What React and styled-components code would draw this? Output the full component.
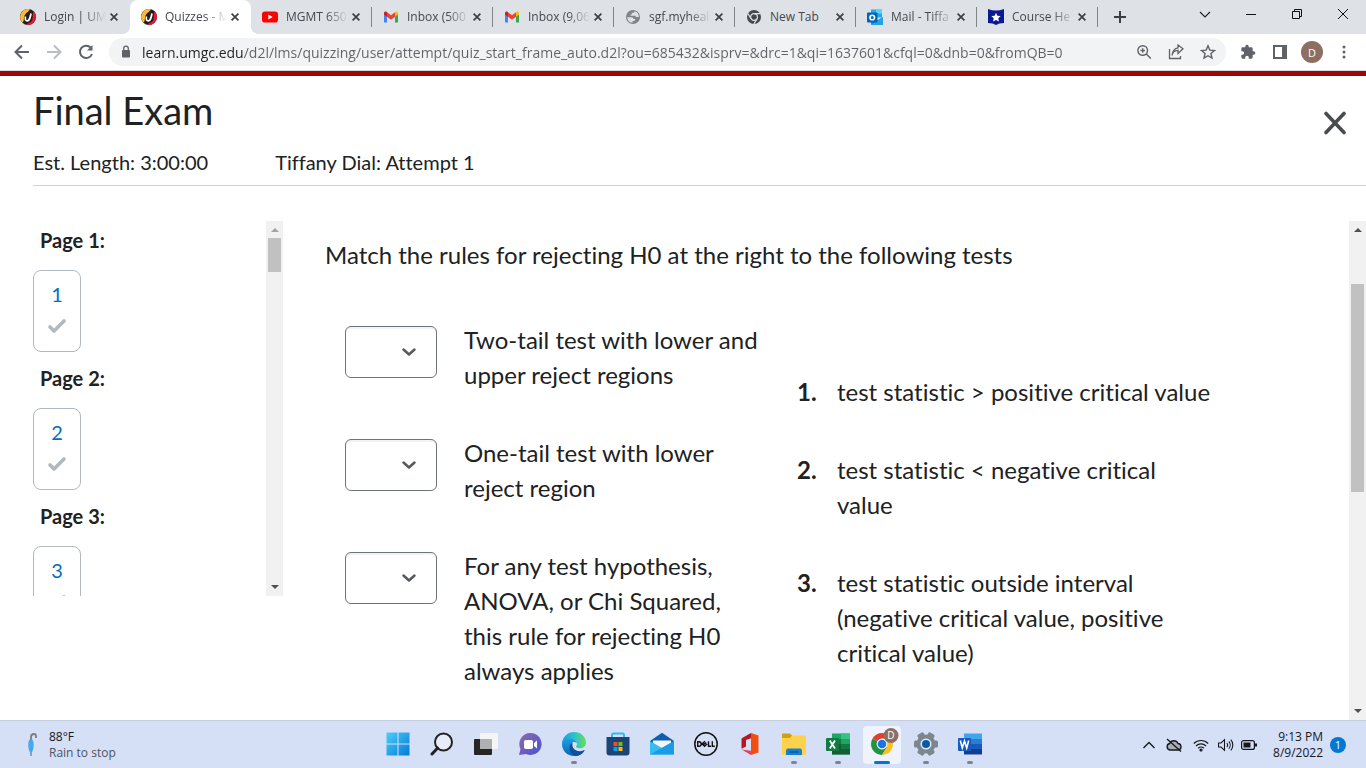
import { useState } from "react";
import styled, { createGlobalStyle, css } from "styled-components";

const GlobalStyle = createGlobalStyle`
  * { box-sizing: border-box; }
  body { margin: 0; background: #fff; }
  button, input, select { font: inherit; color: inherit; }
`

const Screen = styled.div`
  display: flex;
  flex-direction: column;
  height: 100vh;
  overflow: hidden;
  font-family: "Open Sans", "Noto Sans", sans-serif;
  font-size: 12px;
  color: #202124;
`

const IconButton = styled.button`
  display: flex;
  align-items: center;
  justify-content: center;
  flex: none;
  width: ${props => props.$w || 32}px;
  height: ${props => props.$h || 28}px;
  padding: 0;
  border: 0;
  background: none;
  color: ${props => props.$color || '#5f6368'};
  cursor: pointer;
`

/* ---------- browser ---------- */

const TabStrip = styled.div`
  display: flex;
  flex: none;
  height: 34px;
  padding-left: 9px;
  background: #dee1e6;
`

const Tab = styled.div`
  display: flex;
  align-items: center;
  flex: 0 1 121px;
  min-width: 0;
  height: 34px;
  padding: 0 9px 0 11px;
  border-radius: 8px 8px 0 0;
  ${props => props.$active && css`
    position: relative;
    background: #fff;
    &::before, &::after {
      content: '';
      position: absolute;
      bottom: 0;
      width: 8px;
      height: 8px;
    }
    &::before {
      right: 100%;
      background: radial-gradient(circle at 0 0, transparent 8px, #fff 8px);
    }
    &::after {
      left: 100%;
      background: radial-gradient(circle at 100% 0, transparent 8px, #fff 8px);
    }
  `}
`

const TabLink = styled.button`
  display: flex;
  align-items: center;
  gap: 8px;
  flex: 1;
  min-width: 0;
  padding: 0;
  border: 0;
  background: none;
  color: #45494d;
  cursor: pointer;
  svg { flex: none; }
`

const TabTitle = styled.span`
  flex: 1;
  min-width: 0;
  overflow: hidden;
  white-space: nowrap;
  text-align: left;
  line-height: 18px;
  mask-image: linear-gradient(90deg, #000 40px, transparent 62px);
  ${props => props.$whole && css`mask-image: none;`}
`

const Separator = styled.span`
  flex: none;
  align-self: center;
  width: 1px;
  height: 20px;
  margin-left: -1px;
  background: ${props => props.$hidden ? 'transparent' : '#80868b'};
`

const WindowButtons = styled.div`
  display: flex;
  margin-left: auto;
`

const Toolbar = styled.div`
  display: flex;
  align-items: center;
  flex: none;
  height: 37px;
  padding: 0 6px;
  border-bottom: 1px solid #d5d8db;
`

const Omnibox = styled.div`
  display: flex;
  align-items: center;
  flex: 1;
  min-width: 0;
  height: 28px;
  margin: 0 6px 0 7px;
  padding: 0 2px 0 12px;
  border-radius: 14px;
  background: #f1f3f4;
`

const Address = styled.input`
  flex: 1;
  min-width: 0;
  height: 28px;
  margin-left: 11px;
  padding: 0;
  border: 0;
  outline: 0;
  font-size: 14px;
  color: transparent;
  background: linear-gradient(90deg, #202124 102px, #5f6368 102px);
  background-clip: text;
`

const Avatar = styled.span`
  display: grid;
  place-items: center;
  width: 22px;
  height: 22px;
  border-radius: 50%;
  background: #8d6e63;
  color: #fff;
  font-size: 11px;
`

/* ---------- quiz ---------- */

const Quiz = styled.main`
  display: flex;
  flex-direction: column;
  flex: 1;
  min-height: 0;
  border-top: 5px solid #a00606;
  font-family: Lato, sans-serif;
  font-variant-ligatures: none;
  color: #202122;
`

const QuizHeader = styled.header`
  display: flex;
  justify-content: space-between;
  flex: none;
  height: 110px;
  margin-left: 33px;
  border-bottom: 1px solid #cdd5dc;
`

const Title = styled.h1`
  margin: 10px 0 16px;
  font-size: 38px;
  line-height: 48px;
  font-weight: 400;
`

const Facts = styled.div`
  display: flex;
  gap: 67px;
  font-size: 20px;
  line-height: 24px;
`

const CloseWrap = styled.div`
  padding: 33px 15px 0 0;
`

const QuizBody = styled.div`
  display: flex;
  flex: 1;
  min-height: 0;
  padding: 35px 0 0 33px;
`

const PageNav = styled.nav`
  display: flex;
  justify-content: space-between;
  flex: none;
  width: 250px;
  height: 375px;
  overflow: hidden;
`

const PageList = styled.div`
  padding-top: 5px;
`

const PageName = styled.h2`
  margin: 0 0 16px 7px;
  font-size: 20px;
  line-height: 28px;
  font-weight: 700;
`

const QuestionLink = styled.a`
  display: flex;
  flex-direction: column;
  align-items: center;
  gap: 12px;
  width: 48px;
  height: 82px;
  margin-bottom: 12px;
  padding-top: 11px;
  border: 1px solid #b1b9be;
  border-radius: 8px;
  font-size: 20px;
  line-height: 24px;
  color: #006fbf;
  text-decoration: none;
`

const Bar = styled.div`
  display: flex;
  flex-direction: column;
  flex: none;
  align-items: center;
  width: 17px;
  background: #f1f1f1;
`

const BarArrow = styled.span`
  width: 0;
  height: 0;
  margin: ${props => props.$down ? 'auto 0 7px' : '7px 0 0'};
  border: 4px solid transparent;
  border-${props => props.$down ? 'top' : 'bottom'}-color: ${props => props.$dim ? '#a3a3a3' : '#505050'};
  border-${props => props.$down ? 'bottom' : 'top'}-width: 0;
`

const BarThumb = styled.span`
  width: 13px;
  height: ${props => props.$h}px;
  margin-top: ${props => props.$top}px;
  background: #c1c1c1;
`

const Question = styled.section`
  flex: 1;
  min-width: 0;
  padding: 16px 24px 0 42px;
  font-size: 24px;
  line-height: 35px;
  overflow: hidden;
`

const Prompt = styled.p`
  margin: 0 0 50px;
`

const Matching = styled.div`
  display: flex;
  padding-left: 20px;
`

const Terms = styled.div`
  display: flex;
  flex-direction: column;
  flex: none;
  gap: 43px;
  width: 416px;
`

const Term = styled.div`
  display: flex;
  gap: 27px;
`

const TermText = styled.label`
  flex: 1;
`

const Choices = styled.ol`
  display: flex;
  flex-direction: column;
  gap: 43px;
  margin: 52px 0 0 36px;
  padding: 0;
  list-style: none;
`

const Choice = styled.li`
  display: flex;
  max-width: 416px;
`

const ChoiceNumber = styled.b`
  flex: none;
  width: 40px;
`

const SelectBox = styled.div`
  display: grid;
  align-items: center;
  flex: none;
  width: 92px;
  height: 52px;
  margin-top: 4px;
  > * { grid-area: 1 / 1; }
  svg {
    justify-self: end;
    margin-right: 20px;
    pointer-events: none;
  }
`

const Select = styled.select`
  appearance: none;
  width: 100%;
  height: 100%;
  padding: 0 32px 0 16px;
  border: 1px solid #6e7376;
  border-radius: 6px;
  background: #fff;
  box-shadow: inset 0 2px 0 #f1f3f5;
`

/* ---------- taskbar ---------- */

const Taskbar = styled.footer`
  display: grid;
  grid-template-columns: 1fr auto 1fr;
  flex: none;
  height: 48px;
  border-top: 1px solid #c6cfe0;
  background: #d5e0f7;
`

const Weather = styled.button`
  display: flex;
  align-items: center;
  justify-self: start;
  gap: 8px;
  padding: 0 0 0 23px;
  border: 0;
  background: none;
  text-align: left;
  line-height: 16px;
  color: #14171c;
`

const Muted = styled.span`
  color: #4e545e;
`

const Apps = styled.div`
  display: flex;
  align-items: center;
  padding-left: 2px;
`

const AppButton = styled.button`
  display: grid;
  grid-template-rows: 33px 3px;
  grid-template-columns: 38px;
  justify-items: center;
  align-items: center;
  width: 38px;
  height: 38px;
  margin: 0 3px;
  padding: 2px 0 0;
  border: 0;
  border-radius: 4px;
  background: ${props => props.$active ? '#eef3fd' : 'none'};
`

const Running = styled.i`
  width: ${props => props.$active ? 16 : 6}px;
  height: 3px;
  border-radius: 2px;
  background: ${props => props.$active ? '#0075d4' : '#7d838f'};
`

const Tray = styled.div`
  display: flex;
  align-items: center;
  justify-self: end;
  padding-right: 20px;
  color: #14171c;
`

const Clock = styled.time`
  width: 62px;
  text-align: right;
  line-height: 16px;
`

const Count = styled.span`
  display: grid;
  place-items: center;
  width: 16px;
  height: 16px;
  margin-left: 7px;
  border-radius: 50%;
  background: #0078d4;
  color: #fff;
  font-size: 11px;
`

/* ---------- icons ---------- */

const Line = ({ s = 16, box = 16, w = 2, cap = 'butt', children }) => (
  <svg width={s} height={s} viewBox={`0 0 ${box} ${box}`} fill="none" stroke="currentColor" strokeWidth={w} strokeLinecap={cap} strokeLinejoin={cap === 'round' ? 'round' : 'miter'} aria-hidden="true">{children}</svg>
)

const Umgc = () => (
  <svg width="16" height="16" viewBox="0 0 16 16">
    <circle cx="8" cy="8" r="8" fill="#231f20" />
    <path d="M10 .3A8 8 0 0 0 2.5 13.7C5 11 2.7 8.5 5.5 5 7 3.2 8.5 3 10 .3z" fill="#fbb931" />
    <path d="M13.5 2.3A8 8 0 0 1 6 15.7c2.5-2.2 5.5-2 6.3-5 .7-3 .3-5.400 1.200-8.400z" fill="#e11b36" />
    <path d="M5.500 7.500c-.8 3 .2 4.500 2 4.300 2-.3 2.500-2.300 3.500-7.300" fill="none" stroke="#fff" strokeWidth="1.700" />
  </svg>
)

const YouTube = () => (
  <svg width="16" height="16" viewBox="0 0 16 16">
    <rect y="2.500" width="16" height="11" rx="2.800" fill="#f00" />
    <path d="M6.300 5.500v5l4.300-2.500z" fill="#fff" />
  </svg>
)

const Gmail = () => (
  <svg width="16" height="16" viewBox="0 0 16 16">
    <path d="M1 4.500v8.500q0 .6.6.6H4V6.500z" fill="#4285f4" />
    <path d="M15 4.500v8.500q0 .6-.6.6H12V6.500z" fill="#34a853" />
    <path d="M12 3.800v3.900l3-2.300V4c0-1.500-1.500-2-2.400-1.300z" fill="#fbbc04" />
    <path d="M1 4c0-1.500 1.500-2 2.400-1.300L4 3.200v4.500L1 5.400z" fill="#c5221f" />
    <path d="M4 7.700V3.200l4 3 4-3v4.500l-4 3z" fill="#ea4335" />
  </svg>
)

const Globe = () => (
  <svg width="16" height="16" viewBox="0 0 16 16">
    <circle cx="8" cy="8" r="7" fill="#808387" />
    <path d="M2.200 8.200h4.300c1.500 0 2 .7 2 1.800h1.800c0 1.500-.7 2-2 2H7.500v1.800A6 6 0 0 1 2.200 8.200zM9.500 2.300c0 1.200-.5 1.500-1.500 1.500H6.800v1.700H5.500v1.300h4.300c.8 0 1 .7 1 1.300h3.100A6 6 0 0 0 9.500 2.300z" fill="#dee1e6" />
  </svg>
)

const GrayChrome = () => (
  <svg width="16" height="16" viewBox="0 0 16 16">
    <circle cx="8" cy="8" r="7" fill="#45494d" />
    <circle cx="8" cy="8" r="3.400" fill="none" stroke="#dee1e6" strokeWidth="1.200" />
    <path d="M8 4.600h6.300M5 9.800L1.900 4.500M11 9.700L7.900 15" stroke="#dee1e6" strokeWidth="1.200" />
  </svg>
)

const Outlook = () => (
  <svg width="16" height="16" viewBox="0 0 16 16">
    <path d="M4 .5h11v8H4z" fill="#28a8ea" />
    <path d="M9 .5h6v4H9zM4 4.500h5v4H4z" fill="#50d9ff" />
    <path d="M4 8l6 3.500L16 8v7q0 1-1 1H5q-1 0-1-1z" fill="#148ad6" />
    <path d="M4 16l12-8v7q0 1-1 1z" fill="#1fa3ea" />
    <rect y="3.500" width="10.500" height="10" rx=".8" fill="#0364b8" />
    <circle cx="5.250" cy="8.500" r="2.300" fill="none" stroke="#fff" strokeWidth="1.600" />
  </svg>
)

const CourseHero = () => (
  <svg width="16" height="16" viewBox="0 0 16 16">
    <path d="M0 0q8 3 16 0v14q-5 .2-8 2-3-1.800-8-2z" fill="#0a1a94" />
    <path d="M8 3.800l1.400 2.900 3.200.4-2.300 2.200.6 3.100L8 10.900l-2.900 1.500.6-3.100-2.300-2.200 3.200-.4z" fill="#fff" />
  </svg>
)

const Windows = () => (
  <svg width="24" height="24" viewBox="0 0 24 24">
    <defs><linearGradient id="win" gradientUnits="userSpaceOnUse" x1="0" y1="0" x2="24" y2="24"><stop stopColor="#4fd0fa" /><stop offset="1" stopColor="#0078d4" /></linearGradient></defs>
    <path d="M.5.5h11v11H.5zM12.500.5h11v11h-11zM.5 12.500h11v11H.5zM12.500 12.500h11v11h-11z" fill="url(#win)" />
  </svg>
)

const Search = () => (
  <svg width="24" height="24" viewBox="0 0 24 24" fill="none" stroke="#222">
    <circle cx="13.500" cy="10" r="8.500" fill="#e6ecf8" strokeWidth="2" />
    <path d="M7.500 16.200L2 22" strokeWidth="3" strokeLinecap="round" />
  </svg>
)

const TaskView = () => (
  <svg width="24" height="24" viewBox="0 0 24 24">
    <rect x="0" y="7" width="18" height="16" rx="1" fill="#262626" />
    <rect x="6" y="1" width="18" height="16" rx="1" fill="#f5f5f5" />
    <rect x="6" y="7" width="12" height="10" fill="#aeb0b1" />
  </svg>
)

const Chat = () => (
  <svg width="24" height="24" viewBox="0 0 24 24">
    <defs><linearGradient id="chat" x1="0" y1="0" x2="1" y2="1"><stop stopColor="#8f6aad" /><stop offset="1" stopColor="#4a52d0" /></linearGradient></defs>
    <path d="M12.500 1a11 11 0 1 1-4.500 21L1 23l1.500-6A11 11 0 0 1 12.500 1z" fill="url(#chat)" />
    <rect x="6" y="8" width="9" height="9" rx="1.800" fill="#fff" />
    <path d="M16 11l3-2.500v8L16 14z" fill="#fff" />
  </svg>
)

const Edge = () => (
  <svg width="24" height="24" viewBox="0 0 24 24">
    <defs>
      <linearGradient id="edge1"><stop stopColor="#1b9de2" /><stop offset=".55" stopColor="#2dc4cb" /><stop offset="1" stopColor="#6be04c" /></linearGradient>
      <linearGradient id="edge2" x1="0" y1="0" x2="0" y2="1"><stop stopColor="#1ba0e1" /><stop offset="1" stopColor="#0b64b8" /></linearGradient>
    </defs>
    <path d="M0 11.500C.5 4.500 6 0 12 0c7 0 12 5 12 10.300 0 4-2.800 6-6 6-2.500 0-4-.8-4-1.600 0-.6 1-1 1-2.800C15 9.500 12.500 7 8.500 7 4.500 7 1.500 9 0 11.500z" fill="url(#edge1)" />
    <path d="M0 12C0 9 3 6.500 7 6.500c4.500 0 7.500 2.300 8 5-1.300-1.600-3-1.800-4.300-1.200C7.500 12 8 19 15 20.500c3 .6 5.500-.3 7-1.200C20 22.500 16.500 24 12.500 24 5 24 0 18.500 0 12z" fill="url(#edge2)" />
    <path d="M10.700 10.300c-4.500 2.700-4.500 9.700 1.800 13.700C17 24 20.500 22.300 22.500 18.800c.3-.6-.2-1-.8-.6-5.700 2.800-13-.7-11-7.900z" fill="#104f9a" />
  </svg>
)

const Store = () => (
  <svg width="24" height="24" viewBox="0 0 24 24">
    <path d="M6 6V3Q6 1.500 7.500 1.500h9Q18 1.500 18 3v3" fill="none" stroke="#31b9ee" strokeWidth="2" />
    <path d="M.5 5h23v15.500q0 3-3 3h-17q-3 0-3-3z" fill="#1d4478" />
    <path d="M7.500 10h4v4h-4z" fill="#f25022" /><path d="M12.500 10h4v4h-4z" fill="#7fba00" />
    <path d="M7.500 15h4v4h-4z" fill="#00a4ef" /><path d="M12.500 15h4v4h-4z" fill="#ffb900" />
  </svg>
)

const Mail = () => (
  <svg width="24" height="24" viewBox="0 0 24 24">
    <path d="M0 9L12 .8 24 9v5H0z" fill="#0a5fae" />
    <path d="M3 8.500h18V14l-9 3-9-3z" fill="#f5f5f5" />
    <path d="M0 9l12 7 12-7v13.500H0z" fill="#33bdf2" />
    <path d="M0 22.500L24 9v13.500z" fill="#1b9be4" />
  </svg>
)

const Dell = () => (
  <svg width="24" height="24" viewBox="0 0 24 24" fill="none" stroke="#111" strokeWidth="1.500">
    <circle cx="12" cy="12" r="11.200" />
    <path d="M3.700 9.700v4.600h1.200c3 0 3-4.600 0-4.600zM11 9.300L7.900 11.900l3.300 2.700M12.300 10.700l-3 2M13.200 12l-2.500 1.900M14.500 9.200v5h2.500M18.300 9.200v5h2.500" strokeWidth="1.400" />
  </svg>
)

const Office = () => (
  <svg width="24" height="24" viewBox="0 0 24 24">
    <path d="M13 1l7.500 2.500v17L13 23z" fill="#f04e12" />
    <path d="M13 1L5 5.500c-1 .6-1.500 1-1.500 2v9.300L8 14.500V8l5-1.700z" fill="#b41722" />
    <path d="M3.500 17.500L13 18.800V23z" fill="#e5405c" />
  </svg>
)

const Folder = () => (
  <svg width="24" height="24" viewBox="0 0 24 24">
    <path d="M0 2.500Q0 1.500 1 1.500h7L10.500 4H21v5H0z" fill="#d69e12" />
    <path d="M0 6h8l2-2.500h13q1 0 1 1V22q0 1-1 1H1q-1 0-1-1z" fill="#ffd24b" />
    <path d="M4 23v-4.500q0-2 2-2h12q2 0 2 2V23z" fill="#1380d3" />
    <path d="M8 20h8" stroke="#0b5aa5" strokeWidth="1.500" strokeLinecap="round" />
  </svg>
)

const Excel = () => (
  <svg width="24" height="24" viewBox="0 0 24 24">
    <path d="M6 1.500h18v21H6z" fill="#21a366" />
    <path d="M15 1.500h9V7h-9z" fill="#33c481" /><path d="M6 7h9v5H6z" fill="#107c41" />
    <path d="M6 12h18v10.500H6z" fill="#185c37" /><path d="M15 12h9v5h-9z" fill="#107c41" />
    <rect y="6" width="13" height="13" rx="1" fill="#107c41" />
    <path d="M3.800 8.500l5.200 8M9 8.500l-5.200 8" stroke="#fff" strokeWidth="1.800" />
  </svg>
)

const Word = () => (
  <svg width="24" height="24" viewBox="0 0 24 24">
    <path d="M6 1.500h18V7H6z" fill="#41a5ee" /><path d="M6 7h18v5H6z" fill="#2b7cd3" />
    <path d="M6 12h18v5H6z" fill="#185abd" /><path d="M6 17h18v5.500H6z" fill="#103f91" />
    <rect y="6" width="13" height="13" rx="1" fill="#185abd" />
    <path d="M2.300 8.500l2 7.500 2.200-7 2.200 7 2-7.500" fill="none" stroke="#fff" strokeWidth="1.600" />
  </svg>
)

const Chrome = () => (
  <svg width="34" height="32" viewBox="0 0 34 32">
    <g transform="translate(3 2)">
      <path d="M14 14L4.500 8.500A11 11 0 0 1 23.500 8.500z" fill="#e33b2e" />
      <path d="M14 14l-9.500-5.500A11 11 0 0 0 14 25l5-8z" fill="#229342" />
      <path d="M14 14l5 3-5 8A11 11 0 0 0 23.500 8.500H14z" fill="#fbc116" />
      <circle cx="14" cy="14" r="5.400" fill="#fff" /><circle cx="14" cy="14" r="4.300" fill="#1a73e8" />
    </g>
    <circle cx="26" cy="7.500" r="7.500" fill="#8d6e63" />
    <text x="26" y="11" textAnchor="middle" fontSize="10" fill="#fff">D</text>
  </svg>
)

const Settings = () => (
  <svg width="24" height="24" viewBox="0 0 24 24">
    <g fill="#7d868e">
      <circle cx="12" cy="12" r="9.500" />
      {[30, 90, 150].map(a => <rect key={a} x="8.500" y="0" width="7" height="24" rx="1.500" transform={`rotate(${a} 12 12)`} />)}
    </g>
    <circle cx="12" cy="12" r="5.500" fill="#e4edf7" /><circle cx="12" cy="12" r="4" fill="#075ba8" />
  </svg>
)

const Umbrella = () => (
  <svg width="18" height="26" viewBox="0 0 18 26">
    <path d="M8 8V4.500Q8.500 2 11 2t2 4" fill="none" stroke="#7b7d80" strokeWidth="1.800" />
    <path d="M6.500 7.500h3C12 13 10 19 8 22 5.500 19 4 12 6.500 7.500z" fill="#49a7ef" />
    <path d="M8 21v3" stroke="#8c6f66" strokeWidth="1.200" />
  </svg>
)

const Check = () => (
  <svg width="20" height="16" viewBox="0 0 20 16" fill="none" stroke="#b1b9be" strokeWidth="3.600" strokeLinecap="round" strokeLinejoin="round">
    <path d="M3 9l4 4L17 3" />
  </svg>
)

/* ---------- data ---------- */

const tabs = [
  { title: 'Login | UM', icon: Umgc },
  { title: 'Quizzes - M', icon: Umgc },
  { title: 'MGMT 650', icon: YouTube },
  { title: 'Inbox (500', icon: Gmail },
  { title: 'Inbox (9,06', icon: Gmail },
  { title: 'sgf.myheal', icon: Globe },
  { title: 'New Tab', icon: GrayChrome, whole: true },
  { title: 'Mail - Tiffa', icon: Outlook },
  { title: 'Course He', icon: CourseHero },
]

const apps = [
  { name: 'Start', icon: Windows },
  { name: 'Search', icon: Search },
  { name: 'Task view', icon: TaskView },
  { name: 'Chat', icon: Chat },
  { name: 'Edge', icon: Edge, running: true },
  { name: 'Store', icon: Store },
  { name: 'Mail', icon: Mail },
  { name: 'Dell', icon: Dell },
  { name: 'Office', icon: Office },
  { name: 'File Explorer', icon: Folder, running: true },
  { name: 'Excel', icon: Excel, running: true },
  { name: 'Chrome', icon: Chrome, running: true, active: true },
  { name: 'Settings', icon: Settings, running: true },
  { name: 'Word', icon: Word, running: true },
]

const terms = [
  'Two-tail test with lower and upper reject regions',
  'One-tail test with lower reject region',
  'For any test hypothesis, ANOVA, or Chi Squared, this rule for rejecting H0 always applies',
]

const choices = [
  'test statistic > positive critical value',
  'test statistic < negative critical value',
  'test statistic outside interval (negative critical value, positive critical value)',
]

function Scrollbar({ thumb, top, dim }) {
  return <Bar aria-hidden="true">
    <BarArrow $dim={dim} />
    <BarThumb $h={thumb} $top={top} />
    <BarArrow $down />
  </Bar>
}

function Browser() {
  const [url, setUrl] = useState('learn.umgc.edu/d2l/lms/quizzing/user/attempt/quiz_start_frame_auto.d2l?ou=685432&isprv=&drc=1&qi=1637601&cfql=0&dnb=0&fromQB=0')

  return <>
    <TabStrip>
      {tabs.flatMap(({ title, icon: Icon, whole }, i) => [
        <Tab key={i} $active={i === 1}>
          <TabLink><Icon /><TabTitle $whole={whole}>{title}</TabTitle></TabLink>
          <IconButton $w={14} $h={16} $color="#3c4043" aria-label={`Close ${title}`}>
            <Line s={8} box={8} w={1.7}><path d="M.6.6l6.800 6.800M7.400.6L.6 7.400" /></Line>
          </IconButton>
        </Tab>,
        <Separator key={`s${i}`} $hidden={i < 2} />,
      ])}
      <IconButton $w={44} $h={34} $color="#3c4043" aria-label="New tab"><Line s={12} box={12}><path d="M6 0v12M0 6h12" /></Line></IconButton>
      <WindowButtons>
        <IconButton $w={46} aria-label="Search tabs" $color="#222"><Line s={12} box={12} w={1.2}><path d="M1 4l5 5 5-5" /></Line></IconButton>
        <IconButton $w={46} aria-label="Minimize" $color="#111"><Line s={10} box={10} w={1}><path d="M0 5.500h10" /></Line></IconButton>
        <IconButton $w={46} aria-label="Restore" $color="#111"><Line s={10} box={10} w={1}><path d="M.5 2.500h7v7h-7zM2.500 2.500v-2h7v7h-2" /></Line></IconButton>
        <IconButton $w={46} aria-label="Close window" $color="#111"><Line s={10} box={10} w={1}><path d="M0 0l10 10M10 0L0 10" /></Line></IconButton>
      </WindowButtons>
    </TabStrip>
    <Toolbar>
      <IconButton aria-label="Back"><Line><path d="M15 8H2M8 1.500L1.500 8 8 14.500" /></Line></IconButton>
      <IconButton aria-label="Forward" $color="#bbbec1"><Line><path d="M1 8h13M8 1.500L14.500 8 8 14.500" /></Line></IconButton>
      <IconButton aria-label="Reload"><Line><path d="M12.800 3.700A6.200 6.200 0 1 0 14 10" /><path d="M14.500 1v5.500H9z" fill="currentColor" stroke="none" /></Line></IconButton>
      <Omnibox>
        <svg width="10" height="14" viewBox="0 0 10 14"><rect x="1" y="5" width="8" height="7.500" rx="1" fill="#5f6368" /><path d="M2.700 5.500V3.500a2.300 2.300 0 0 1 4.600 0v2" fill="none" stroke="#5f6368" strokeWidth="1.300" /></svg>
        <Address aria-label="Address" value={url} onChange={e => setUrl(e.target.value)} />
        <IconButton aria-label="Zoom"><Line w={1.4}><circle cx="6.700" cy="6.500" r="4.800" /><path d="M10.300 10l4.500 4.500M6.700 4.300v4.400M4.500 6.500h4.400" /></Line></IconButton>
        <IconButton aria-label="Share"><Line w={1.3}><path d="M1.500 5v9.500h11V12M4 11.500c.4-3.300 2.400-5 6-5.200V9.500l5-4.700L10 1v2.800C6.500 4.200 4.500 7 4 11.500z" /></Line></IconButton>
        <IconButton aria-label="Bookmark"><Line w={1.4}><path d="M8 1.800l1.800 4.300 4.700.4-3.600 3 1.100 4.600L8 11.700l-4 2.400 1.100-4.600-3.600-3 4.700-.4z" /></Line></IconButton>
      </Omnibox>
      <IconButton aria-label="Extensions"><svg width="16" height="16" viewBox="0 0 24 24" fill="#5f6368"><path d="M20.500 11H19V7a2 2 0 0 0-2-2h-4V3.500a2.500 2.500 0 0 0-5 0V5H4a2 2 0 0 0-2 2v3.800h1.500a2.700 2.700 0 0 1 0 5.400H2V20a2 2 0 0 0 2 2h3.800v-1.500a2.700 2.700 0 0 1 5.400 0V22H17a2 2 0 0 0 2-2v-4h1.500a2.500 2.500 0 0 0 0-5z" /></svg></IconButton>
      <IconButton aria-label="Side panel"><svg width="14" height="14" viewBox="0 0 14 14" fill="#5f6368"><path d="M0 0h14v14H0zM2 2v10h7V2z" fillRule="evenodd" /></svg></IconButton>
      <IconButton aria-label="Profile"><Avatar>D</Avatar></IconButton>
      <IconButton aria-label="Menu"><svg width="4" height="16" viewBox="0 0 4 16" fill="#5f6368"><circle cx="2" cy="3" r="1.500" /><circle cx="2" cy="8" r="1.500" /><circle cx="2" cy="13" r="1.500" /></svg></IconButton>
    </Toolbar>
  </>
}

function MatchQuestion() {
  const [answers, setAnswers] = useState(['', '', ''])

  return <Question>
    <Prompt>Match the rules for rejecting H0 at the right to the following tests</Prompt>
    <Matching>
      <Terms>
        {terms.map((term, i) => (
          <Term key={i}>
            <SelectBox>
              <Select id={`term${i}`} value={answers[i]} onChange={e => setAnswers(answers.map((a, n) => n === i ? e.target.value : a))}>
                <option value=""></option>
                {choices.map((c, n) => <option key={n}>{n + 1}</option>)}
              </Select>
              <svg width="16" height="10" viewBox="0 0 16 10" fill="none" stroke="#565a5c" strokeWidth="2.500" strokeLinecap="round" strokeLinejoin="round"><path d="M2.500 2.500L8 7.500l5.500-5" /></svg>
            </SelectBox>
            <TermText htmlFor={`term${i}`}>{term}</TermText>
          </Term>
        ))}
      </Terms>
      <Choices>
        {choices.map((choice, i) => (
          <Choice key={i}><ChoiceNumber>{i + 1}.</ChoiceNumber><span>{choice}</span></Choice>
        ))}
      </Choices>
    </Matching>
  </Question>
}

export default function App() {
  return <Screen>
    <GlobalStyle />
    <Browser />
    <Quiz>
      <QuizHeader>
        <div>
          <Title>Final Exam</Title>
          <Facts><span>Est. Length: 3:00:00</span><span>Tiffany Dial: Attempt 1</span></Facts>
        </div>
        <CloseWrap>
          <IconButton aria-label="Exit quiz" $color="#494c4e"><Line s={24} box={24} w={3.6} cap="round"><path d="M3 2.500l18 19M21 2.500l-18 19" /></Line></IconButton>
        </CloseWrap>
      </QuizHeader>
      <QuizBody>
        <PageNav aria-label="Quiz pages">
          <PageList>
            {[1, 2, 3].map(n => (
              <div key={n}>
                <PageName>Page {n}:</PageName>
                <QuestionLink href={`#q${n}`}>{n}<Check /></QuestionLink>
              </div>
            ))}
          </PageList>
          <Scrollbar thumb={34} top={6} dim />
        </PageNav>
        <MatchQuestion />
        <Scrollbar thumb={208} top={52} />
      </QuizBody>
    </Quiz>
    <Taskbar>
      <Weather><Umbrella /><span>88°F<br /><Muted>Rain to stop</Muted></span></Weather>
      <Apps>
        {apps.map(({ name, icon: Icon, running, active }) => (
          <AppButton key={name} aria-label={name} $active={active}>
            <Icon />
            {running && <Running $active={active} />}
          </AppButton>
        ))}
      </Apps>
      <Tray>
        <IconButton $w={24} $color="#14171c" aria-label="Hidden icons"><Line s={12} box={12} w={1.3}><path d="M.5 9L6 3.500 11.500 9" /></Line></IconButton>
        <IconButton $w={26} $color="#14171c" aria-label="OneDrive"><Line w={1.3}><path d="M4 13a3.300 3.300 0 0 1-.3-6.500A4.500 4.500 0 0 1 12 6.500 3.300 3.300 0 0 1 12.500 13z" fill="#a9adb3" /><path d="M1 2l14 12.500" /></Line></IconButton>
        <IconButton $w={28} $color="#14171c" aria-label="Wi-Fi"><Line w={1.2}><path d="M.8 6.500a10.200 10.200 0 0 1 14.400 0M3 9a7 7 0 0 1 10 0M5.200 11.300a4 4 0 0 1 5.600 0" /><circle cx="8" cy="13" r="1" fill="currentColor" /></Line></IconButton>
        <IconButton $w={22} $color="#14171c" aria-label="Volume"><Line w={1.1}><path d="M.5 6v4h2.500l3.500 3.300V2.700L3 6zM8.800 6a3 3 0 0 1 0 4M10.800 4.300a5.500 5.500 0 0 1 0 7.400M12.800 2.700a8 8 0 0 1 0 10.600" /></Line></IconButton>
        <IconButton $w={24} $color="#14171c" aria-label="Battery"><Line w={1.2}><rect x=".6" y="3.600" width="12.800" height="8.800" rx="2" /><path d="M2.500 5.500h7v5h-7z" fill="currentColor" stroke="none" /><path d="M15 6.500v3" strokeWidth="2" /></Line></IconButton>
        <Clock>9:13 PM<br />8/9/2022</Clock>
        <Count>1</Count>
      </Tray>
    </Taskbar>
  </Screen>
}
